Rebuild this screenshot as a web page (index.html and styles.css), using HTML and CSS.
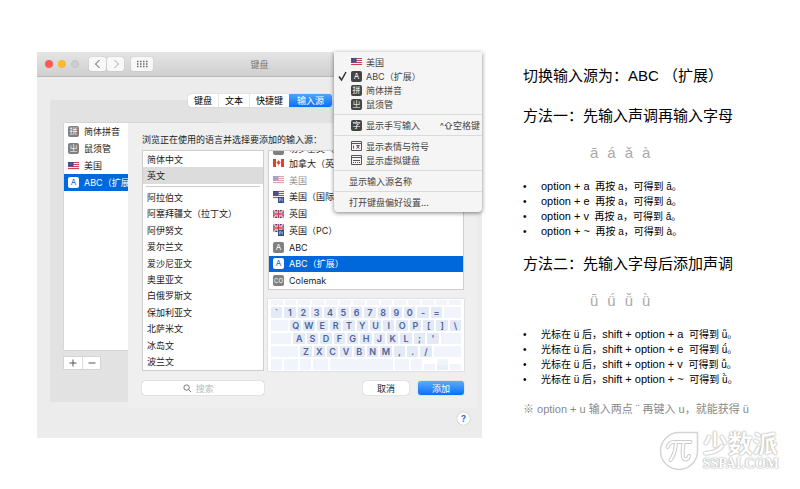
FILE: index.html
```html
<!DOCTYPE html>
<html lang="zh-CN">
<head>
  <meta charset="UTF-8">
  <meta name="viewport" content="width=device-width, initial-scale=1.0">
  <title>ABC（扩展）输入声调</title>
  <link rel="stylesheet" href="styles.css">
</head>
<body>
  <!-- Ícones usados mais de uma vez -->
  <svg class="defs" aria-hidden="true">
    <symbol id="flag-us" viewBox="0 0 22 16">
      <rect width="22" height="16" fill="#f6e9ea"/>
      <path d="M0 1h22M0 5h22M0 9h22M0 13h22" stroke="#c8454f" stroke-width="2"/>
      <rect width="11" height="9" fill="#3c4a86"/>
      <path d="M1 3h9M1 6h9" stroke="#9aa5cc" stroke-width="1" stroke-dasharray="1 2"/>
    </symbol>
    <symbol id="flag-uk" viewBox="0 0 22 16">
      <rect width="22" height="16" fill="#2e4285"/>
      <path d="M0 0l22 16M22 0L0 16" stroke="#fff" stroke-width="3.4"/>
      <path d="M0 0l22 16M22 0L0 16" stroke="#cf3a47" stroke-width="1.3"/>
      <path d="M11 0v16M0 8h22" stroke="#fff" stroke-width="5"/>
      <path d="M11 0v16M0 8h22" stroke="#cf3a47" stroke-width="3"/>
    </symbol>
    <symbol id="flag-ca" viewBox="0 0 22 16">
      <rect width="22" height="16" fill="#fff"/>
      <path d="M0 0h6v16H0zM16 0h6v16h-6z" fill="#e0402f"/>
      <path d="M11 2l1.3 2.6 1.2-.5-.4 3 2-1-.7 2.6-2.6 2.2h-.5V14h-.6v-3.100h-.5L7.600 8.700 6.900 6.100l2 1-.4-3 1.200.5z" fill="#e0402f"/>
    </symbol>
    <symbol id="pc-mark" viewBox="0 0 12 12">
      <rect width="12" height="12" fill="#34518f"/>
      <path d="M3 9V3h3v3H3M10 4H8v4h2" stroke="#dfe5f5" stroke-width="1" fill="none"/>
    </symbol>
  </svg>

  <main class="page">
    <section class="window">
      <header class="titlebar">
        <div class="lights">
          <span class="light red"></span>
          <span class="light yellow"></span>
          <span class="light off"></span>
        </div>
        <div class="nav">
          <button type="button" aria-label="后退"><svg viewBox="0 0 10 10"><path d="M6.500 1L2.500 5l4 4" stroke="#555"/></svg></button>
          <button type="button" aria-label="前进"><svg viewBox="0 0 10 10"><path d="M3.500 1l4 4-4 4" stroke="#aaa"/></svg></button>
        </div>
        <button type="button" class="show-all" aria-label="显示全部">
          <svg viewBox="0 0 12 8"><path d="M1 1.500h11M1 4h11M1 6.500h11" stroke="#666" stroke-width="1.500" stroke-dasharray="1.500 1.500"/></svg>
        </button>
        <h1 class="title">键盘</h1>
      </header>

      <div class="content">
        <div class="tabs">
          <button type="button">键盘</button>
          <button type="button">文本</button>
          <button type="button">快捷键</button>
          <button type="button" class="active">输入源</button>
        </div>
        <div class="panel">
          <ul class="sources" role="listbox" aria-label="输入源">
            <li role="option"><span class="badge">拼</span>简体拼音</li>
            <li role="option"><span class="badge">㞢</span>鼠须管</li>
            <li role="option"><svg class="flag"><use href="#flag-us"/></svg>美国</li>
            <li role="option" class="selected" aria-selected="true"><span class="badge">A</span>ABC（扩展）</li>
          </ul>
          <div class="add-remove">
            <button type="button" aria-label="添加"><svg viewBox="0 0 10 10"><path d="M5 1.500v7M1.500 5h7"/></svg></button>
            <button type="button" aria-label="移除"><svg viewBox="0 0 10 10"><path d="M1.500 5h7"/></svg></button>
          </div>
        </div>
        <button type="button" class="help" aria-label="帮助">?</button>
      </div>

      <!-- Folha para adicionar fontes -->
      <div class="sheet">
        <p class="prompt">浏览正在使用的语言并选择要添加的输入源：</p>
        <div class="columns">
          <ul class="languages" role="listbox" aria-label="语言">
            <li role="option">简体中文</li>
            <li role="option" class="current" aria-selected="true">英文</li>
            <li class="divider" role="presentation"></li>
            <li role="option">阿拉伯文</li>
            <li role="option">阿塞拜疆文（拉丁文）</li>
            <li role="option">阿伊努文</li>
            <li role="option">爱尔兰文</li>
            <li role="option">爱沙尼亚文</li>
            <li role="option">奥里亚文</li>
            <li role="option">白俄罗斯文</li>
            <li role="option">保加利亚文</li>
            <li role="option">北萨米文</li>
            <li role="option">冰岛文</li>
            <li role="option">波兰文</li>
          </ul>
          <div class="right">
            <ul class="layouts" role="listbox" aria-label="键盘布局">
              <li role="option" class="cut"><span class="badge"></span>切罗基文（国</li>
              <li role="option"><svg class="flag"><use href="#flag-ca"/></svg>加拿大（英文）</li>
              <li role="option" class="dim"><svg class="flag"><use href="#flag-us"/></svg>美国</li>
              <li role="option"><span class="flag-pc"><svg class="flag"><use href="#flag-us"/></svg><svg class="pc"><use href="#pc-mark"/></svg></span>美国（国际 - PC）</li>
              <li role="option"><svg class="flag"><use href="#flag-uk"/></svg>英国</li>
              <li role="option"><span class="flag-pc"><svg class="flag"><use href="#flag-uk"/></svg><svg class="pc"><use href="#pc-mark"/></svg></span>英国（PC）</li>
              <li role="option"><span class="badge">A</span>ABC</li>
              <li role="option" class="selected" aria-selected="true"><span class="badge">A</span>ABC（扩展）</li>
              <li role="option"><span class="badge small">CO</span>Colemak</li>
            </ul>
            <div class="keyboard">
              <div class="keys fn"><i></i><i></i><i></i><i></i><i></i><i></i><i></i><i></i><i></i><i></i><i></i><i></i><i></i><i></i></div>
              <div class="keys"><b>`</b><b>1</b><b>2</b><b>3</b><b>4</b><b>5</b><b>6</b><b>7</b><b>8</b><b>9</b><b>0</b><b>-</b><b>=</b><i class="tab"></i></div>
              <div class="keys"><i class="tab"></i><b>Q</b><b>W</b><b>E</b><b>R</b><b>T</b><b>Y</b><b>U</b><b>I</b><b>O</b><b>P</b><b>[</b><b>]</b><b>\</b></div>
              <div class="keys"><i class="caps"></i><b>A</b><b>S</b><b>D</b><b>F</b><b>G</b><b>H</b><b>J</b><b>K</b><b>L</b><b>;</b><b>'</b><i class="caps"></i></div>
              <div class="keys"><i class="shift"></i><b>Z</b><b>X</b><b>C</b><b>V</b><b>B</b><b>N</b><b>M</b><b>,</b><b>.</b><b>/</b><i class="shift"></i></div>
              <div class="keys"><i></i><i class="cmd"></i><i></i><i class="cmd"></i><i class="space"></i><i class="cmd"></i><i></i><i class="arrow"></i><i class="updown"></i><i class="arrow"></i></div>
            </div>
          </div>
        </div>
        <div class="actions">
          <label class="search">
            <svg viewBox="0 0 10 10"><circle cx="4" cy="4" r="3"/><path d="M6.300 6.300L9 9"/></svg>
            <input type="text" placeholder="搜索" aria-label="搜索">
          </label>
          <div class="buttons">
            <button type="button">取消</button>
            <button type="button" class="primary">添加</button>
          </div>
        </div>
      </div>

      <!-- Menu de entrada -->
      <div class="menu" role="menu">
        <button type="button" role="menuitem"><svg class="flag"><use href="#flag-us"/></svg>美国</button>
        <button type="button" role="menuitem" class="checked"><svg class="check" viewBox="0 0 9 10"><path d="M1 5.500L3.500 9 8 1"/></svg><span class="badge">A</span>ABC（扩展）</button>
        <button type="button" role="menuitem"><span class="badge">拼</span>简体拼音</button>
        <button type="button" role="menuitem"><span class="badge">㞢</span>鼠须管</button>
        <hr>
        <button type="button" role="menuitem"><span class="badge">字</span>显示手写输入<span class="shortcut">^<svg viewBox="0 0 9 9"><path d="M4.500 1L8 4.500H6.200V8H2.800V4.500H1z"/></svg>空格键</span></button>
        <hr>
        <button type="button" role="menuitem"><svg class="viewer" viewBox="0 0 11 10"><path d="M.5.5h10v9H.5zM.5 2.500h10M2.500 4.500v3M5.500 4.500h3M5.500 7.500l3-2.500M5.500 5l3 2.500"/></svg>显示表情与符号</button>
        <button type="button" role="menuitem"><svg class="viewer" viewBox="0 0 11 10"><path d="M.5.5h10v9H.5zM.5 2.500h10M2 5.500h7" /><path d="M2 7.500h7" stroke-dasharray="1 1"/></svg>显示虚拟键盘</button>
        <hr>
        <button type="button" role="menuitem" class="plain">显示输入源名称</button>
        <hr>
        <button type="button" role="menuitem" class="plain">打开键盘偏好设置...</button>
      </div>
    </section>

    <article class="notes">
      <h2>切换输入源为：ABC （扩展）</h2>
      <h2>方法一：先输入声调再输入字母</h2>
      <p class="tones"><span>ā</span><span>á</span><span>ǎ</span><span>à</span></p>
      <ul>
        <li><kbd>option + a</kbd>&nbsp; 再按 a，可得到 ā。</li>
        <li><kbd>option + e</kbd>&nbsp; 再按 a，可得到 á。</li>
        <li><kbd>option + v</kbd>&nbsp; 再按 a，可得到 ǎ。</li>
        <li><kbd>option + ~</kbd>&nbsp; 再按 a，可得到 à。</li>
      </ul>
      <h2>方法二：先输入字母后添加声调</h2>
      <p class="tones"><span>ǖ</span><span>ǘ</span><span>ǚ</span><span>ǜ</span></p>
      <ul>
        <li>光标在 ü 后，<kbd>shift + option + a</kbd>&nbsp; 可得到 ǖ。</li>
        <li>光标在 ü 后，<kbd>shift + option + e</kbd>&nbsp; 可得到 ǘ。</li>
        <li>光标在 ü 后，<kbd>shift + option + v</kbd>&nbsp; 可得到 ǚ。</li>
        <li>光标在 ü 后，<kbd>shift + option + ~</kbd>&nbsp; 可得到 ǜ。</li>
      </ul>
      <p class="hint">※ option + u 输入两点 ¨ 再键入 u，就能获得 ü</p>
      <footer class="brand">
        <svg viewBox="0 0 40 40">
          <path d="M20 1.500h18.500V20A18.500 18.500 0 1 1 20 1.500z" fill="#fff" stroke="#d4d4d4" stroke-width="1.500"/>
          <path d="M8.500 16c1.500-4 3.500-5 6.500-5h16.500M17 11.500c-.5 7-1.500 13-5.500 17.500M24.500 11.500c-1 8-2 17 2 17 2 0 3-1.500 3.500-3.500" fill="none" stroke="#ccc" stroke-width="4" stroke-linecap="round"/>
          <path d="M8.500 16c1.500-4 3.500-5 6.500-5h16.500M17 11.500c-.5 7-1.500 13-5.500 17.500M24.500 11.500c-1 8-2 17 2 17 2 0 3-1.500 3.500-3.500" fill="none" stroke="#fff" stroke-width="2" stroke-linecap="round"/>
        </svg>
        <div class="brand-text">
          <strong>少数派</strong>
          <span>SSPAI.COM</span>
        </div>
      </footer>
    </article>
  </main>
</body>
</html>
```
FILE: styles.css
```css
:root {
  --blue: #0068da;
  --badge: #808080;
  --ui: "Inter", "Noto Sans CJK SC", sans-serif;
  --text: "Liberation Sans", "Noto Sans CJK SC", sans-serif;
}

* {
  box-sizing: border-box;
}

body {
  margin: 0;
  background: #fff;
  color: #000;
  font-family: var(--text);
}

h1, h2, p, ul {
  margin: 0;
  padding: 0;
  font-weight: normal;
}

ul {
  list-style: none;
}

button, input {
  margin: 0;
  padding: 0;
  border: none;
  background: none;
  color: inherit;
  font: inherit;
}

svg {
  display: block;
  flex: none;
  fill: none;
}

.defs {
  position: absolute;
  width: 0;
  height: 0;
}

.page {
  display: grid;
  grid-template-columns: minmax(0, 445fr) minmax(0, 256fr);
  gap: 41px;
  align-items: start;
  padding: 52px 21px 0 37px;
}

/* janela */
.window {
  position: relative;
  background: #ececec;
  color: #222;
  font-family: var(--ui);
  font-size: 9px;
  line-height: 13px;
}

.titlebar {
  position: relative;
  display: flex;
  align-items: center;
  gap: 7px;
  height: 25px;
  padding: 0 8px;
  background: linear-gradient(#e6e5e6, #d0cfd0);
  border-bottom: 1px solid #b9b9b9;
}

.lights {
  display: flex;
  gap: 5px;
  margin-right: 3px;
}

.light {
  width: 8px;
  height: 8px;
  border-radius: 50%;
}

.red { background: #fb5b54; }
.yellow { background: #fbba2c; }
.off { background: #cfcdcf; border: 1px solid #c2c0c2; }

.nav {
  display: flex;
  gap: 1px;
}

.nav button, .show-all {
  display: flex;
  align-items: center;
  justify-content: center;
  width: 17px;
  height: 14px;
  border-radius: 2px;
  background: #f8f8f8;
  box-shadow: 0 0 1px #999;
}

.nav svg {
  width: 10px;
  height: 10px;
}

.titlebar .show-all {
  width: 22px;
}

.show-all svg {
  width: 12px;
  height: 8px;
}

.title {
  position: absolute;
  inset: 6px 0 auto;
  text-align: center;
  font-size: 9px;
  color: #777;
  pointer-events: none;
}

.content {
  display: flex;
  flex-direction: column;
  padding: 17px 12px 13px 13px;
}

.tabs {
  position: relative;
  align-self: center;
  display: flex;
  border-radius: 3px;
  background: #fff;
  box-shadow: 0 0 1px #999;
}

.tabs button {
  padding: 0 6px;
  height: 13px;
  color: #000;
}

.tabs button + button {
  border-left: 1px solid #e4e4e4;
}

.tabs .active {
  padding: 0 8px;
  border-left: none;
  border-radius: 0 3px 3px 0;
  background: linear-gradient(#4fa4fb, #0a70f5);
  color: #fff;
}

.panel {
  margin-top: -7px;
  padding: 23px 14px 33px;
  background: #e2e2e2;
  border-radius: 2px;
}

.sources {
  width: 40%;
  height: 227px;
  background: #fff;
  box-shadow: 0 0 1px #999;
}

.sources li, .layouts li {
  display: flex;
  align-items: center;
  gap: 5px;
  padding-left: 4px;
  white-space: nowrap;
}

.sources li {
  height: 17px;
}

.selected {
  background: var(--blue);
  color: #fff;
}

.badge {
  flex: none;
  width: 11px;
  height: 11px;
  border-radius: 2px;
  background: var(--badge);
  color: #fff;
  font-size: 8px;
  line-height: 11px;
  text-align: center;
}

.badge.small {
  font-size: 6px;
}

.selected .badge {
  background: #fff;
  color: var(--blue);
}

.flag {
  width: 11px;
  height: 8px;
}

.flag-pc {
  position: relative;
  flex: none;
  width: 11px;
  height: 12px;
}

.pc {
  position: absolute;
  right: 0;
  bottom: 0;
  width: 6px;
  height: 6px;
}

.add-remove {
  display: inline-flex;
  margin-top: 7px;
  background: #fff;
  box-shadow: 0 0 1px #888;
  vertical-align: top;
}

.add-remove button {
  display: flex;
  align-items: center;
  justify-content: center;
  width: 18px;
  height: 12px;
}

.add-remove button + button {
  border-left: 1px solid #ddd;
}

.add-remove svg {
  width: 10px;
  height: 10px;
  stroke: #555;
}

.help {
  align-self: flex-end;
  width: 13px;
  height: 13px;
  margin-top: 10px;
  border-radius: 50%;
  background: #fff;
  box-shadow: 0 0 1px #888;
  color: #2a78d8;
  font-weight: bold;
}

/* folha */
.sheet {
  position: absolute;
  inset: 71px 5px 30px 91px;
  display: flex;
  flex-direction: column;
  padding: 10px 13px 13px 14px;
  background: #efefef;
}

.prompt {
  color: #222;
  white-space: nowrap;
}

.columns {
  flex: 1;
  display: grid;
  grid-template-columns: minmax(0, 122fr) minmax(0, 196fr);
  gap: 4px;
  min-height: 0;
  margin-top: 4px;
}

.languages, .layouts {
  display: flex;
  flex-direction: column;
  overflow: hidden;
  background: #fff;
  border: 1px solid #cdcdcd;
}

.languages li {
  flex: 1;
  display: flex;
  align-items: center;
  padding-left: 4px;
}

.languages .current {
  background: #dcdcdc;
}

.languages .divider {
  flex: none;
  height: 1px;
  margin: 2px 3px;
  background: #ccc;
}

.right {
  display: flex;
  flex-direction: column;
  gap: 9px;
  min-height: 0;
}

.layouts {
  flex: 1;
}

.layouts li {
  flex: 1;
  min-height: 0;
}

.layouts .cut {
  flex: none;
  align-items: flex-end;
  height: 4px;
  overflow: hidden;
}

.layouts .dim {
  opacity: 0.5;
}

.keyboard {
  display: flex;
  flex-direction: column;
  gap: 2px;
  padding: 1px 3px;
  background: #fff;
  box-shadow: 0 0 1px #999;
}

.keys {
  display: flex;
  gap: 2px;
  height: 11px;
}

.keys.fn {
  height: 5px;
}

.keys b, .keys i {
  flex: 1 1 0;
  min-width: 0;
  background: #f1f4fa;
}

.keys b {
  background: #e3e9f5;
  border-radius: 1px;
  color: #50659c;
  font-size: 9px;
  font-weight: 600;
  line-height: 11px;
  text-align: center;
}

.keys .tab { flex-grow: 1.5; }
.keys .caps { flex-grow: 1.8; }
.keys .shift { flex-grow: 2.4; }
.keys .cmd { flex-grow: 1.3; }
.keys .space { flex-grow: 5.7; }

.keys .arrow {
  margin-top: 5px;
}

.keys .updown {
  border-bottom: 5px solid #e9eef7;
}

.actions {
  display: flex;
  justify-content: space-between;
  align-items: center;
  margin-top: 10px;
}

.search {
  display: flex;
  align-items: center;
  justify-content: center;
  gap: 4px;
  width: 38%;
  height: 14px;
  border-radius: 3px;
  background: #fff;
  box-shadow: 0 0 1px #888;
}

.search svg {
  width: 9px;
  height: 9px;
  stroke: #666;
}

.search input {
  width: 28px;
  height: 13px;
  outline: none;
}

.search input::placeholder {
  color: #bbb;
}

.buttons {
  display: flex;
  gap: 9px;
}

.buttons button {
  width: 46px;
  height: 14px;
  border-radius: 3px;
  background: #fff;
  box-shadow: 0 0 1px #888;
}

.buttons .primary {
  background: linear-gradient(#5cabfb, #0a70f8);
  color: #fff;
}

/* menu */
.menu {
  position: absolute;
  top: 0;
  right: 0;
  width: 148px;
  padding: 3px 0;
  border-radius: 0 0 4px 4px;
  background: #f5f5f5;
  box-shadow: 0 1px 4px rgba(0, 0, 0, 0.5);
  color: #444;
  --badge: #444;
}

.menu button {
  display: flex;
  align-items: center;
  gap: 4px;
  width: 100%;
  height: 14px;
  padding: 0 2px 0 17px;
  white-space: nowrap;
}

.menu .checked {
  padding-left: 4px;
}

.menu .plain {
  padding-left: 15px;
}

.menu hr {
  height: 1px;
  margin: 3px 0;
  border: none;
  background: #dadada;
}

.check {
  width: 9px;
  height: 10px;
  stroke: #333;
  stroke-width: 1.5;
}

.viewer {
  width: 11px;
  height: 10px;
  stroke: #555;
}

.shortcut {
  display: flex;
  align-items: center;
  margin-left: auto;
}

.shortcut svg {
  width: 9px;
  height: 9px;
  stroke: #555;
}

/* notas */
.notes {
  padding-top: 13px;
}

.notes h2 {
  font-size: 15px;
  line-height: 22px;
  white-space: nowrap;
}

.notes h2 + h2 {
  margin-top: 18px;
}

.tones {
  display: flex;
  gap: 9px;
  margin: 16px 0 16px 67px;
  color: #aaa;
  font-size: 15px;
  line-height: 20px;
}

.notes ul {
  margin-bottom: 14px;
  font-size: 10px;
  line-height: 15px;
}

.notes li {
  display: flex;
  white-space: pre;
}

.notes li::before {
  content: "•";
  width: 18px;
}

.notes kbd {
  font-family: var(--text);
  font-size: 11px;
}

.hint {
  color: #888;
  font-size: 11px;
  line-height: 16px;
  white-space: nowrap;
}

.brand {
  display: flex;
  justify-content: flex-end;
  gap: 4px;
  margin-top: 14px;
  color: #fff;
}

.brand svg {
  width: 40px;
  height: 40px;
}

.brand-text {
  text-shadow: 0 0 1px #999, 0 0 2px #aaa;
}

.brand strong {
  display: block;
  font-size: 25px;
  line-height: 26px;
}

.brand span {
  display: block;
  font-family: "Liberation Serif", serif;
  font-size: 14px;
  font-weight: bold;
  line-height: 13px;
}
```
